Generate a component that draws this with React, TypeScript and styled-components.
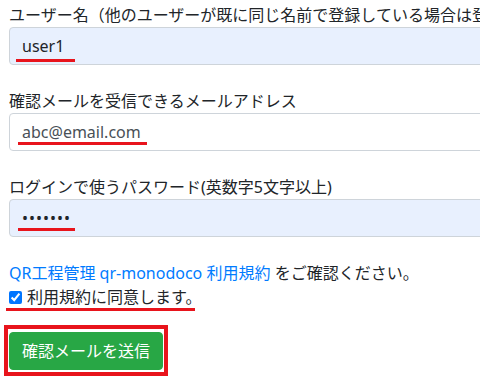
import styled, { createGlobalStyle } from "styled-components";

const GlobalStyle = createGlobalStyle`
    html, body {
        margin: 0;
        overflow: hidden;
        background: #fff;
    }

    body {
        font-family: "Noto Sans", "Noto Sans CJK JP", sans-serif;
        font-size: 16px;
        line-height: 1.5;
        color: #212529;
    }
`;

function App() {
    return (
        <>
            <GlobalStyle />
            <Style_Form onSubmit={(e) => e.preventDefault()}>
                <Style_Group>
                    <Style_Label>
                        ユーザー名（他のユーザーが既に同じ名前で登録している場合は登録できません）
                    </Style_Label>
                    <Style_Field>
                        <Style_Input $filled type="text" defaultValue="user1" />
                        <Style_Mark $left={7} $top={32} $width={59} />
                    </Style_Field>
                </Style_Group>

                <Style_Group>
                    <Style_Label>確認メールを受信できるメールアドレス</Style_Label>
                    <Style_Field>
                        <Style_Input type="email" defaultValue="abc@email.com" />
                        <Style_Mark $left={9} $top={29} $width={129} />
                    </Style_Field>
                </Style_Group>

                <Style_Group>
                    <Style_Label>ログインで使うパスワード(英数字5文字以上)</Style_Label>
                    <Style_Field>
                        <Style_Input $filled $dots type="password" defaultValue="abc1234" />
                        <Style_Mark $left={9} $top={29} $width={57} />
                    </Style_Field>
                </Style_Group>

                <Style_Terms>
                    <a href="#">QR工程管理 qr-monodoco 利用規約</a> をご確認ください。
                </Style_Terms>

                <Style_Check>
                    <input type="checkbox" id="agree" defaultChecked />
                    <label htmlFor="agree">利用規約に同意します。</label>
                    <Style_Mark $left={-3} $top={23} $width={189} />
                </Style_Check>

                <Style_Highlight>
                    <Style_Button type="submit">確認メールを送信</Style_Button>
                </Style_Highlight>
            </Style_Form>
        </>
    );
}

export default App;

const Style_Form = styled.form`
    width: 720px;
    padding: 3px 0 0 9px;
`;

const Style_Group = styled.div`
    margin-bottom: 24px;
`;

const Style_Label = styled.label`
    display: block;
    white-space: nowrap;
    height: 24px;
`;

const Style_Field = styled.div`
    position: relative;
`;

const Style_Input = styled.input<{ $filled?: boolean; $dots?: boolean }>`
    display: block;
    box-sizing: border-box;
    width: 100%;
    height: 38px;
    padding: 6px 12px;
    font: inherit;
    color: ${(p) => (p.$filled ? "#212529" : "#495057")};
    letter-spacing: ${(p) => (p.$dots ? "1px" : "normal")};
    background: ${(p) => (p.$filled ? "#e8f0fe" : "#fff")};
    border: 1px solid #ced4da;
    border-radius: 4px;
    outline: none;
`;

const Style_Mark = styled.span<{ $left: number; $top: number; $width: number }>`
    position: absolute;
    left: ${(p) => p.$left}px;
    top: ${(p) => p.$top}px;
    width: ${(p) => p.$width}px;
    height: 3px;
    background: #e8141c;
    pointer-events: none;
`;

const Style_Terms = styled.p`
    margin: 0;
    white-space: nowrap;

    a {
        color: #007bff;
        text-decoration: none;
    }
`;

const Style_Check = styled.div`
    position: relative;
    display: flex;
    align-items: center;
    gap: 5px;
    height: 24px;

    input {
        width: 13px;
        height: 13px;
        margin: 0;
        accent-color: #0075ff;
    }
`;

const Style_Highlight = styled.div`
    display: inline-block;
    margin: 16px 0 0 -5px;
    padding: 3px 1px 2px 1px;
    border: 4px solid #e8141c;
`;

const Style_Button = styled.button`
    display: block;
    height: 38px;
    padding: 6px 12px;
    font: inherit;
    color: #fff;
    background: #28a745;
    border: 1px solid #28a745;
    border-radius: 4px;
    cursor: pointer;
`;
